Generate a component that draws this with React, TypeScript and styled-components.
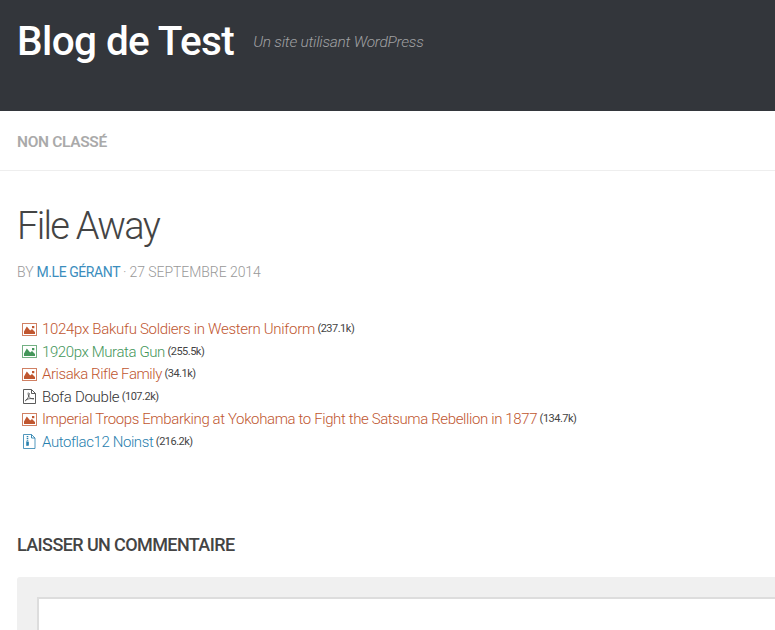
import React from "react";
import styled, { createGlobalStyle } from "styled-components";

const GlobalStyle = createGlobalStyle`
  * { box-sizing: border-box; }
  body {
    margin: 0;
    height: 630px;
    overflow: hidden;
    background: #fff;
    color: #444;
    font-family: Roboto, "Open Sans", sans-serif;
  }
`;

const Page = styled.div`
  height: 630px;
  overflow: hidden;
`;

const Header = styled.header`
  display: flex;
  align-items: center;
  gap: 19px;
  height: 111px;
  padding: 16px 17px 45px;
  background: #33363b;
  white-space: nowrap;
`;

const SiteTitle = styled.h1`
  margin: 0;
  font-size: 40.5px;
  font-weight: 550;
  line-height: 50px;
  letter-spacing: -0.6px;
  color: #fff;
`;

const Tagline = styled.p`
  margin: 2px 0 0;
  font-size: 15.5px;
  font-weight: 300;
  font-style: italic;
  line-height: 20px;
  letter-spacing: -0.25px;
  color: #a0a1a3;
`;

const CategoryBar = styled.div`
  height: 60px;
  padding: 20px 17px;
  border-bottom: 1px solid #eee;
  font-size: 15.5px;
  font-weight: 600;
  line-height: 22px;
  letter-spacing: -0.33px;
  color: #aaa;
`;

const Article = styled.main`
  padding: 30px 0 0 17px;
`;

const PostTitle = styled.h2`
  margin: 0;
  font-size: 38px;
  font-weight: 360;
  line-height: 50px;
  letter-spacing: -1.7px;
  color: #444;
`;

const Byline = styled.p`
  display: flex;
  gap: 3px;
  margin: 11px 0 0;
  font-size: 14px;
  font-weight: 300;
  line-height: 20px;
  letter-spacing: -0.05px;
  color: #999;
`;

const Author = styled.a`
  font-weight: 380;
  letter-spacing: -0.43px;
  color: #3b8dbd;
`;

const Files = styled.ul`
  margin: 36px 0 0;
  padding: 0 0 0 5px;
  list-style: none;
`;

const FileRow = styled.li<{ $color: string }>`
  display: flex;
  align-items: center;
  height: 22.5px;
  color: ${(p) => p.$color};
  white-space: nowrap;
`;

const Glyph = styled.svg`
  flex: none;
  width: 15px;
  height: 15px;
  margin-right: 5px;
`;

const FileName = styled.a<{ $tracking: number }>`
  font-size: 15px;
  font-weight: 300;
  line-height: 22px;
  letter-spacing: ${(p) => p.$tracking}px;
`;

const FileSize = styled.span`
  margin-left: 2.5px;
  font-size: 11px;
  font-weight: 400;
  line-height: 22px;
  letter-spacing: -0.5px;
  color: #444;
`;

const ReplyTitle = styled.h3`
  margin: 80px 0 20px;
  font-size: 18px;
  font-weight: 500;
  line-height: 24px;
  letter-spacing: -0.6px;
  color: #444;
`;

const ReplyPanel = styled.section`
  height: 120px;
  padding: 20px 0 0 20px;
  border-radius: 3px 0 0 0;
  background: #f0f0f0;
`;

const CommentBox = styled.div`
  height: 100px;
  border: 2px solid #ddd;
  border-right: 0;
  background: #fff;
`;

type Kind = "image" | "pdf" | "zip";

const ImageGlyph = () => (
  <Glyph viewBox="0 0 15 15" fill="none" stroke="currentColor">
    <rect x="0.5" y="1.5" width="14" height="12" strokeOpacity="0.75" />
    <path d="M2 12V9.500l2.800-5 3.400 4 1.800-1.500 3 3V12z" fill="currentColor" stroke="none" />
    <rect x="10" y="4" width="2.300" height="2.200" fill="currentColor" stroke="none" />
  </Glyph>
);

const PdfGlyph = () => (
  <Glyph viewBox="0 0 15 15" fill="none" stroke="currentColor" strokeWidth="1">
    <path d="M1.500.5h8l4 4v10h-12z" strokeOpacity="0.8" />
    <path d="M9.500.8v3.700h3.800" strokeWidth="0.8" />
    <path
      d="M6.300 3.500c-.6 1.500 0 3.400 1.200 4.800 1.100 1.200 2.300 1.700 4.500 1.700M7.300 4c.3 2.500-1.500 6-4.300 8.200M3.500 11.300c1.800-1.400 4.500-2 8.500-1.800"
      strokeWidth="0.7"
    />
  </Glyph>
);

const ZipGlyph = () => (
  <Glyph viewBox="0 0 15 15" fill="none" stroke="currentColor" strokeWidth="1">
    <path d="M1.500.5h8l3.500 3.500v10.500H1.500z" strokeOpacity="0.8" />
    <path d="M9.500.5V4H13" strokeWidth="0.9" />
    <path d="M5.500 2v5" strokeWidth="1.600" strokeDasharray="1.200 0.900" />
    <rect x="4.500" y="7.800" width="2.200" height="3.800" fill="currentColor" strokeWidth="0.5" />
  </Glyph>
);

const glyphs: Record<Kind, React.FC> = { image: ImageGlyph, pdf: PdfGlyph, zip: ZipGlyph };

const RUST = "#c0562f";
const files: { kind: Kind; name: string; size: string; color: string; tracking: number }[] = [
  { kind: "image", name: "1024px Bakufu Soldiers in Western Uniform", size: "237.1k", color: RUST, tracking: -0.3 },
  { kind: "image", name: "1920px Murata Gun", size: "255.5k", color: "#44965a", tracking: -0.4 },
  { kind: "image", name: "Arisaka Rifle Family", size: "34.1k", color: RUST, tracking: -0.43 },
  { kind: "pdf", name: "Bofa Double", size: "107.2k", color: "#333", tracking: -0.27 },
  {
    kind: "image",
    name: "Imperial Troops Embarking at Yokohama to Fight the Satsuma Rebellion in 1877",
    size: "134.7k",
    color: RUST,
    tracking: -0.38,
  },
  { kind: "zip", name: "Autoflac12 Noinst", size: "216.2k", color: "#2880ae", tracking: -0.4 },
];

export default function App() {
  return (
    <Page>
      <GlobalStyle />
      <Header>
        <SiteTitle>Blog de Test</SiteTitle>
        <Tagline>Un site utilisant WordPress</Tagline>
      </Header>
      <CategoryBar>NON CLASSÉ</CategoryBar>
      <Article>
        <PostTitle>File Away</PostTitle>
        <Byline>
          <span>BY</span>
          <Author>M.LE GÉRANT</Author>
          <span>·</span>
          <span>27 SEPTEMBRE 2014</span>
        </Byline>
        <Files>
          {files.map((file) => {
            const Icon = glyphs[file.kind];
            return (
              <FileRow key={file.name} $color={file.color}>
                <Icon />
                <FileName $tracking={file.tracking}>{file.name}</FileName>
                <FileSize>({file.size})</FileSize>
              </FileRow>
            );
          })}
        </Files>
        <ReplyTitle>LAISSER UN COMMENTAIRE</ReplyTitle>
        <ReplyPanel>
          <CommentBox />
        </ReplyPanel>
      </Article>
    </Page>
  );
}
